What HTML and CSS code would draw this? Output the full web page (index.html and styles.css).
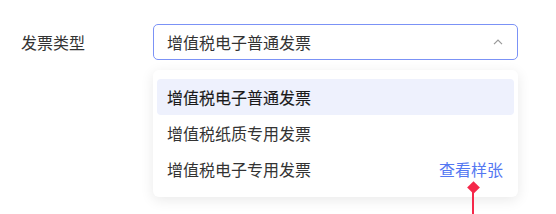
FILE: index.html
```html
<!DOCTYPE html>
<html lang="zh-CN">
<head>
	<meta charset="UTF-8">
	<title>发票类型</title>
	<link rel="stylesheet" href="styles.css">
</head>
<body>
	<div class="form">
		<div class="field">
			<label class="label">发票类型</label>
			<div class="picker">
				<div class="select">
					<span class="value">增值税电子普通发票</span>
					<svg class="arrow" viewBox="0 0 10 6"><polyline points="1 5.2 5 1.2 9 5.2"/></svg>
				</div>
				<ul class="menu">
					<li class="option" data-active="1">增值税电子普通发票</li>
					<li class="option">增值税纸质专用发票</li>
					<li class="option">增值税电子专用发票<a class="sample">查看样张</a></li>
				</ul>
			</div>
		</div>
	</div>

	<div class="pin"></div>
</body>
</html>
```

FILE: styles.css
```css
* {
	margin: 0;
	padding: 0;
	box-sizing: border-box;
}
body {
	background-color: white;
	color: #333;
	font-family: "Noto Sans CJK SC", "Noto Sans", sans-serif;
	font-size: 16px;
	position: relative;
	height: 214px;
	overflow: hidden;
}

/* Form */
.form {
	padding: 24px 0 0 21px;
}
.field {
	display: flex;
	align-items: flex-start;
}
.label {
	width: 132px;
	height: 36px;
	line-height: 36px;
	color: #333;
}
.picker {
	width: 365px;
}
.select {
	height: 36px;
	border: 1px solid #7b92f6;
	border-radius: 5px;
	display: flex;
	align-items: center;
	justify-content: space-between;
	padding: 0 14px 0 13px;
}
.arrow {
	width: 10px;
	height: 6px;
	fill: none;
	stroke: #999;
	stroke-width: 1.2;
}

/* Menu */
.menu {
	list-style: none;
	margin-top: 10px;
	padding: 9px 4px 10px 4px;
	border-radius: 6px;
	background-color: white;
	box-shadow: 0 3px 14px rgba(0, 0, 0, .09);
}
.option {
	height: 36px;
	display: flex;
	align-items: center;
	justify-content: space-between;
	padding: 0 11px 0 10px;
	border-radius: 4px;
	color: #333;
}
.option[data-active="1"] {
	background-color: #eef1fd;
	color: #1a1a1a;
	-webkit-text-stroke: .15px #1a1a1a;
}
.sample {
	color: #5478f2;
	cursor: pointer;
}

/* Pointer marker */
.pin {
	position: absolute;
	left: 472px;
	top: 188px;
	width: 2px;
	bottom: 0;
	background-color: #f5284a;
}
.pin::before {
	content: "";
	position: absolute;
	left: -3.5px;
	top: -5px;
	width: 9px;
	height: 9px;
	background-color: #f5284a;
	transform: rotate(45deg);
}
```
